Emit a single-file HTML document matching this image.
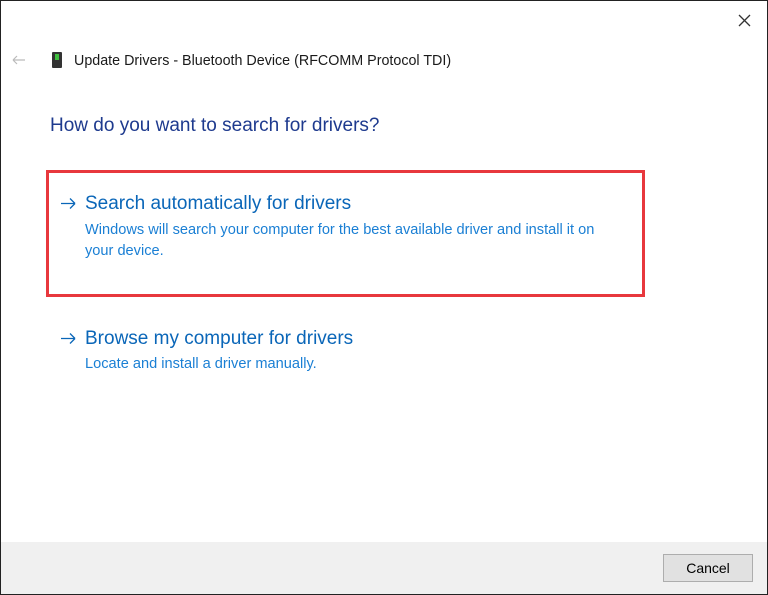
<!DOCTYPE html>
<html><head><meta charset="utf-8"><style>
html,body{margin:0;padding:0;}
body{width:768px;height:595px;position:relative;overflow:hidden;background:#fff;font-family:"Liberation Sans",sans-serif;}
.frame{position:absolute;left:0;top:0;width:766px;height:593px;border:1px solid #222;z-index:5;}
.abs{position:absolute;white-space:nowrap;}
.footer{position:absolute;left:0;top:542px;width:768px;height:53px;background:#f0f0f0;}
.btn{position:absolute;left:663px;top:554px;width:88px;height:26px;background:#e1e1e1;border:1px solid #adadad;font-size:14px;color:#000;text-align:center;line-height:26px;}
.red{position:absolute;left:46px;top:170px;width:593px;height:121px;border:3px solid #e8383d;}
</style></head><body>
<div class="footer"></div>
<div class="frame"></div>
<svg style="position:absolute;left:738px;top:14px" width="13" height="13"><path d="M1 1L12 12M12 1L1 12" stroke="#333" stroke-width="1.3"/></svg>
<svg style="position:absolute;left:12px;top:55px" width="14" height="10"><path d="M1 5H13M1 5L5 1M1 5L5 9" stroke="#bbb" stroke-width="1.2" fill="none"/></svg>
<div style="position:absolute;left:52px;top:52px;width:10px;height:16px;background:#333;border-radius:1px;"></div>
<div style="position:absolute;left:55px;top:54px;width:4px;height:6px;background:#3fbf3f;"></div>
<div class="abs" style="left:74px;top:53px;font-size:14.3px;color:#1a1a1a;">Update Drivers - Bluetooth Device (RFCOMM Protocol TDI)</div>
<div class="abs" style="left:50px;top:115px;font-size:19px;color:#1e3a8e;">How do you want to search for drivers?</div>
<div class="red"></div>
<svg style="position:absolute;left:61px;top:198px" width="15" height="11"><path d="M0 5.5H14M14 5.5L9 0.5M14 5.5L9 10.5" stroke="#0a66b8" stroke-width="1.3" fill="none"/></svg>
<div class="abs" style="left:85px;top:193px;font-size:19px;color:#0a66b8;">Search automatically for drivers</div>
<div class="abs" style="left:85px;top:220px;font-size:14.6px;color:#1a7fd4;line-height:21px;">Windows will search your computer for the best available driver and install it on<br>your device.</div>
<svg style="position:absolute;left:61px;top:333px" width="15" height="11"><path d="M0 5.5H14M14 5.5L9 0.5M14 5.5L9 10.5" stroke="#0a66b8" stroke-width="1.3" fill="none"/></svg>
<div class="abs" style="left:85px;top:328px;font-size:19px;color:#0a66b8;">Browse my computer for drivers</div>
<div class="abs" style="left:85px;top:356px;font-size:14.6px;color:#1a7fd4;">Locate and install a driver manually.</div>
<div class="btn">Cancel</div>
</body></html>
